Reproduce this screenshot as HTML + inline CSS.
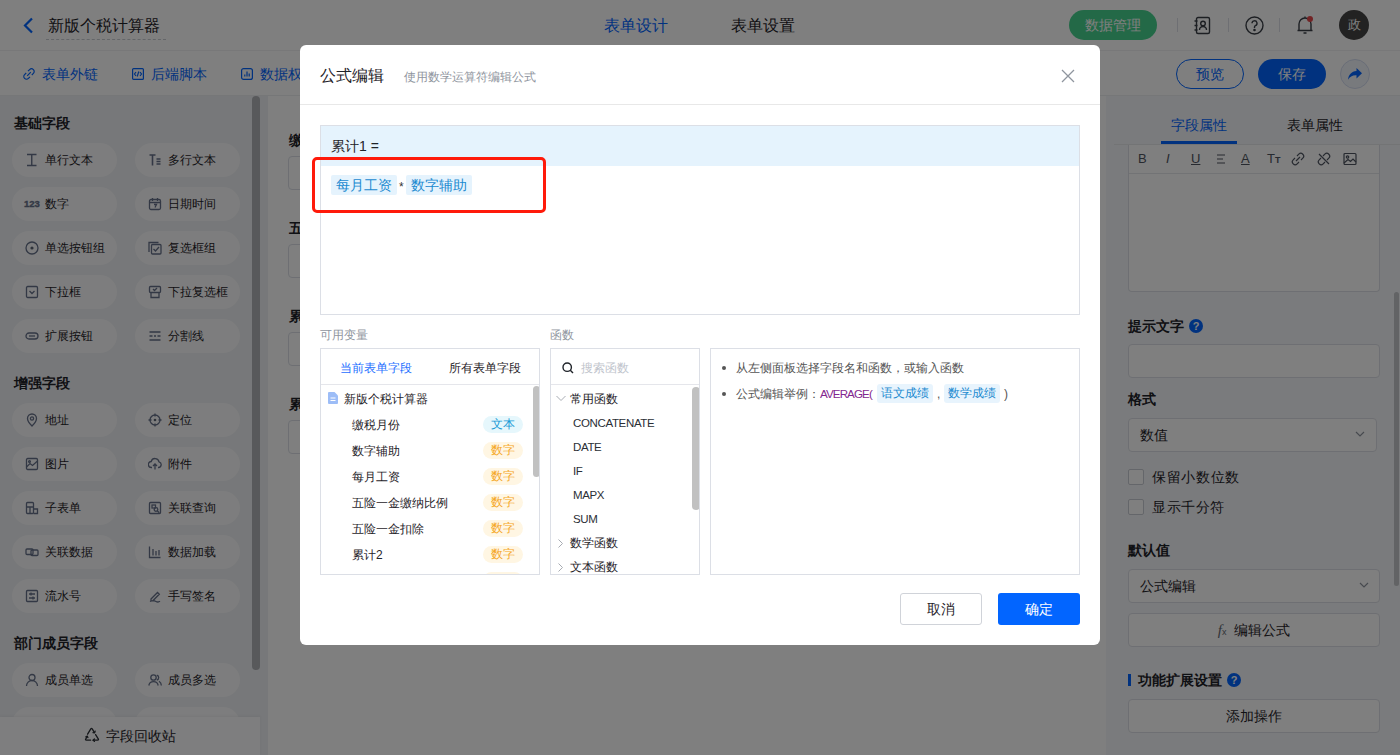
<!DOCTYPE html>
<html><head><meta charset="utf-8">
<style>
*{box-sizing:border-box;margin:0;padding:0}
html,body{width:1400px;height:755px;overflow:hidden;font-family:"Liberation Sans",sans-serif;color:#333;background:#fff}
.a{position:absolute;white-space:nowrap}
#hdr{position:absolute;left:0;top:0;width:1400px;height:51px;background:#fff;border-bottom:1px solid #f0f1f3}
#tb{position:absolute;left:0;top:51px;width:1400px;height:45px;background:#fff;border-bottom:1px solid #eceef1}
#side{position:absolute;left:0;top:96px;width:268px;height:659px;background:#eef0f4}
#canvas{position:absolute;left:268px;top:96px;width:839px;height:659px;background:#fff}
#rp{position:absolute;left:1106px;top:96px;width:294px;height:659px;background:#f5f7fa}
.pill{position:absolute;width:105px;height:34px;border-radius:17px;background:#fbfbfc;font-size:12px;line-height:34px;color:#1f2329}
.pill .ic{position:absolute;left:13px;top:10px;width:14px;height:14px}
.pill .tx{position:absolute;left:33px;top:0}
.sh{position:absolute;left:14px;font-size:14px;font-weight:bold;color:#1f2329;line-height:16px}
#mask{position:absolute;left:0;top:0;width:1400px;height:755px;background:rgba(0,0,0,.5)}
#modal{position:absolute;left:300px;top:45px;width:800px;height:600px;background:#fff;border-radius:6px}
.lbl{position:absolute;font-size:14px;color:#1f2329;font-weight:bold}
.inp{position:absolute;border:1px solid #dcdfe6;border-radius:4px;background:#fff}
</style></head>
<body>
<!-- header -->
<div id="hdr">
  <svg class="a" style="left:22px;top:17px" width="14" height="17" viewBox="0 0 14 17"><path d="M10 1.5 L3 8.5 L10 15.5" fill="none" stroke="#0265ff" stroke-width="2.2"/></svg>
  <div class="a" style="left:48px;top:16px;font-size:16px;line-height:20px;color:#1f2329">新版个税计算器</div>
  <div class="a" style="left:46px;top:39px;width:120px;border-top:1px dashed #c8ccd2"></div>
  <div class="a" style="left:604px;top:16px;font-size:16px;line-height:20px;color:#0265ff">表单设计</div>
  <div class="a" style="left:731px;top:16px;font-size:16px;line-height:20px;color:#1f2329">表单设置</div>
  <div class="a" style="left:1069px;top:10px;width:88px;height:30px;border-radius:15px;background:#47d28f;color:#fff;font-size:14px;line-height:30px;text-align:center">数据管理</div>
  <div class="a" style="left:1177px;top:18px;width:1px;height:14px;background:#dcdfe6"></div>
  <div class="a" style="left:1228px;top:18px;width:1px;height:14px;background:#dcdfe6"></div>
  <div class="a" style="left:1279px;top:18px;width:1px;height:14px;background:#dcdfe6"></div>

  <svg class="a" style="left:1193px;top:16px" width="19" height="19" viewBox="0 0 19 19" fill="none" stroke="#3a3f47" stroke-width="1.4"><rect x="3.5" y="1.5" width="13" height="16" rx="1.5"/><circle cx="10" cy="7.5" r="2.3"/><path d="M6.5 14a3.5 3.5 0 0 1 7 0M1.5 5h3M1.5 9.5h3M1.5 14h3"/></svg>
  <svg class="a" style="left:1245px;top:16px" width="19" height="19" viewBox="0 0 19 19" fill="none" stroke="#3a3f47" stroke-width="1.4"><circle cx="9.5" cy="9.5" r="8.5"/><path d="M7 7.3a2.5 2.5 0 1 1 3.5 2.3c-.7.3-1 .8-1 1.5v.9"/><circle cx="9.5" cy="14" r=".6" fill="#3a3f47"/></svg>
  <svg class="a" style="left:1296px;top:15px" width="19" height="20" viewBox="0 0 19 20" fill="none" stroke="#3a3f47" stroke-width="1.4"><path d="M3 15.5V9a6 6 0 0 1 12 0v6.5M1.5 15.5h15M7.5 18h3M9 1.5v1.5"/></svg>
  <div class="a" style="left:1307px;top:16px;width:6px;height:6px;border-radius:3px;background:#e5474a"></div>
  <div class="a" style="left:1339px;top:10px;width:30px;height:30px;border-radius:15px;background:#444;color:#fff;font-size:13px;line-height:30px;text-align:center">政</div>
</div>
<div id="tb">
  <div class="a" style="left:42px;top:14px;font-size:14px;line-height:18px;color:#0265ff">表单外链</div>
  <div class="a" style="left:151px;top:14px;font-size:14px;line-height:18px;color:#0265ff">后端脚本</div>
  <div class="a" style="left:260px;top:14px;font-size:14px;line-height:18px;color:#0265ff">数据权限</div>

  <svg class="a" style="left:23px;top:17px" width="12" height="12" viewBox="0 0 12 12" fill="none" stroke="#0265ff" stroke-width="1.2"><path d="M5 3.2l1.6-1.6a2.6 2.6 0 0 1 3.8 3.8L8.8 7M7 8.8l-1.6 1.6a2.6 2.6 0 0 1-3.8-3.8L3.2 5M4.2 7.8l3.6-3.6"/></svg>
  <svg class="a" style="left:132px;top:17px" width="12" height="12" viewBox="0 0 12 12" fill="none" stroke="#0265ff" stroke-width="1.2"><rect x=".6" y=".6" width="10.8" height="10.8" rx="1"/><path d="M4 4L2.5 6 4 8M8 4l1.5 2L8 8M6.8 3.5l-1.6 5"/></svg>
  <svg class="a" style="left:241px;top:17px" width="12" height="12" viewBox="0 0 12 12" fill="none" stroke="#0265ff" stroke-width="1.2"><rect x=".6" y=".6" width="10.8" height="10.8" rx="2"/><path d="M3.8 8.5V6.5M6 8.5V3.5M8.2 8.5V5.5"/></svg>
  <div class="a" style="left:1176px;top:8px;width:68px;height:30px;border-radius:15px;border:1px solid #0265ff;color:#0265ff;font-size:14px;line-height:28px;text-align:center">预览</div>
  <div class="a" style="left:1258px;top:8px;width:68px;height:30px;border-radius:15px;background:#0265ff;color:#fff;font-size:14px;line-height:30px;text-align:center">保存</div>
  <div class="a" style="left:1340px;top:8px;width:30px;height:30px;border-radius:15px;border:1px solid #d3dcef;background:#f1f4fb"></div>
  <svg class="a" style="left:1347px;top:16px" width="16" height="14" viewBox="0 0 16 14"><path d="M9.5 1L15 6.2 9.5 11.4V8.3C5.5 8.1 2.8 9.6 1 12.8 1.6 7.8 4.3 4.6 9.5 4.1z" fill="#0265ff"/></svg>
</div>
<div id="side">
  <div class="sh" style="top:19px">基础字段</div>
  <div class="pill" style="left:12px;top:47px"><svg class="ic" width="14" height="14" viewBox="0 0 14 14" fill="none" stroke="#66718a" stroke-width="1.3"><path d="M2 1.5h9.5M2 12.5h9.5M6.75 1.5v11" stroke-width="1.4"/></svg><span class="tx">单行文本</span></div>
  <div class="pill" style="left:135px;top:47px"><svg class="ic" width="14" height="14" viewBox="0 0 14 14" fill="none" stroke="#66718a" stroke-width="1.3"><path d="M1.5 2h6M4.5 2v10.5" stroke-width="1.6"/><path d="M8.5 6h4M8.5 8.5h4M8.5 11h4"/></svg><span class="tx">多行文本</span></div>
  <div class="pill" style="left:12px;top:91px"><span class="ic" style="font-family:'Liberation Sans';font-weight:700;color:#66718a;line-height:14px;left:12px;top:10px;font-size:9.5px;letter-spacing:0;width:auto;-webkit-text-stroke:0.35px #66718a">123</span><span class="tx">数字</span></div>
  <div class="pill" style="left:135px;top:91px"><svg class="ic" width="14" height="14" viewBox="0 0 14 14" fill="none" stroke="#66718a" stroke-width="1.3"><rect x="1.5" y="2.5" width="11" height="10" rx="1.5"/><path d="M1.5 5.5h11M4.5 1v3M9.5 1v3M6 7.5h2.5L7 10.5"/></svg><span class="tx">日期时间</span></div>
  <div class="pill" style="left:12px;top:135px"><svg class="ic" width="14" height="14" viewBox="0 0 14 14" fill="none" stroke="#66718a" stroke-width="1.3"><circle cx="7" cy="7" r="6"/><circle cx="7" cy="7" r="1.6" fill="#5d6575" stroke="none"/></svg><span class="tx">单选按钮组</span></div>
  <div class="pill" style="left:135px;top:135px"><svg class="ic" width="14" height="14" viewBox="0 0 14 14" fill="none" stroke="#66718a" stroke-width="1.3"><path d="M1 11V1.5h9.5"/><rect x="3.5" y="3.5" width="9.5" height="9.5" rx="1"/><path d="M5.5 8l2 2 3.5-4"/></svg><span class="tx">复选框组</span></div>
  <div class="pill" style="left:12px;top:179px"><svg class="ic" width="14" height="14" viewBox="0 0 14 14" fill="none" stroke="#66718a" stroke-width="1.3"><rect x="1.5" y="1.5" width="11" height="11" rx="1.2"/><path d="M4.5 6l2.5 2.5L9.5 6"/></svg><span class="tx">下拉框</span></div>
  <div class="pill" style="left:135px;top:179px"><svg class="ic" width="14" height="14" viewBox="0 0 14 14" fill="none" stroke="#66718a" stroke-width="1.3"><rect x="1.5" y="1.5" width="11" height="6" rx="1"/><path d="M3 7.5v5h8v-5M5 4l1.5 1.5L9 3"/></svg><span class="tx">下拉复选框</span></div>
  <div class="pill" style="left:12px;top:223px"><svg class="ic" width="14" height="14" viewBox="0 0 14 14" fill="none" stroke="#66718a" stroke-width="1.3"><rect x="1" y="4" width="12" height="6" rx="3"/><path d="M4 7h6"/></svg><span class="tx">扩展按钮</span></div>
  <div class="pill" style="left:135px;top:223px"><svg class="ic" width="14" height="14" viewBox="0 0 14 14" fill="none" stroke="#66718a" stroke-width="1.3"><path d="M1.5 3h11M1.5 11h11M1.5 7h3M6 7h2M9.5 7h3"/></svg><span class="tx">分割线</span></div>
  <div class="sh" style="top:279px">增强字段</div>
  <div class="pill" style="left:12px;top:307px"><svg class="ic" width="14" height="14" viewBox="0 0 14 14" fill="none" stroke="#66718a" stroke-width="1.3"><path d="M7 13s-4.5-4.3-4.5-7.5a4.5 4.5 0 0 1 9 0C11.5 8.7 7 13 7 13z"/><circle cx="7" cy="5.5" r="1.6"/></svg><span class="tx">地址</span></div>
  <div class="pill" style="left:135px;top:307px"><svg class="ic" width="14" height="14" viewBox="0 0 14 14" fill="none" stroke="#66718a" stroke-width="1.3"><circle cx="7" cy="7" r="5"/><circle cx="7" cy="7" r="1.3" fill="#5d6575" stroke="none"/><path d="M7 0.5v3M7 10.5v3M0.5 7h3M10.5 7h3"/></svg><span class="tx">定位</span></div>
  <div class="pill" style="left:12px;top:351px"><svg class="ic" width="14" height="14" viewBox="0 0 14 14" fill="none" stroke="#66718a" stroke-width="1.3"><rect x="1.5" y="1.5" width="11" height="11" rx="1.2"/><path d="M1.5 10l3.5-3.5 2.5 2 5-4.5"/><circle cx="4.5" cy="4.5" r="0.9"/></svg><span class="tx">图片</span></div>
  <div class="pill" style="left:135px;top:351px"><svg class="ic" width="14" height="14" viewBox="0 0 14 14" fill="none" stroke="#66718a" stroke-width="1.3"><path d="M4 10.5H3.5a3 3 0 0 1-.3-6A4 4 0 0 1 11 4.8a2.9 2.9 0 0 1-.5 5.7H10"/><path d="M7 12.5V7M5 9l2-2 2 2"/></svg><span class="tx">附件</span></div>
  <div class="pill" style="left:12px;top:395px"><svg class="ic" width="14" height="14" viewBox="0 0 14 14" fill="none" stroke="#66718a" stroke-width="1.3"><rect x="1.5" y="1.5" width="7" height="11" rx="1"/><path d="M1.5 6h7M8.5 8h4v4.5h-4M5 6v6.5"/></svg><span class="tx">子表单</span></div>
  <div class="pill" style="left:135px;top:395px"><svg class="ic" width="14" height="14" viewBox="0 0 14 14" fill="none" stroke="#66718a" stroke-width="1.3"><rect x="1.5" y="1.5" width="11" height="11" rx="1"/><rect x="4" y="4" width="3.5" height="3" /><circle cx="8" cy="8.5" r="1.8"/><path d="M9.3 9.8l2 2"/></svg><span class="tx">关联查询</span></div>
  <div class="pill" style="left:12px;top:439px"><svg class="ic" width="14" height="14" viewBox="0 0 14 14" fill="none" stroke="#66718a" stroke-width="1.3"><rect x="1" y="4" width="7" height="5.5" rx="1"/><rect x="6" y="5" width="7" height="5.5" rx="1"/></svg><span class="tx">关联数据</span></div>
  <div class="pill" style="left:135px;top:439px"><svg class="ic" width="14" height="14" viewBox="0 0 14 14" fill="none" stroke="#66718a" stroke-width="1.3"><path d="M1.5 1.5v11h11M5 10.5V4M8 10.5V6M11 10.5V5"/></svg><span class="tx">数据加载</span></div>
  <div class="pill" style="left:12px;top:483px"><svg class="ic" width="14" height="14" viewBox="0 0 14 14" fill="none" stroke="#66718a" stroke-width="1.3"><rect x="1.5" y="1.5" width="11" height="11" rx="1"/><path d="M4 5h6M4 9h6M6 3.5v3M8 7.5v3"/></svg><span class="tx">流水号</span></div>
  <div class="pill" style="left:135px;top:483px"><svg class="ic" width="14" height="14" viewBox="0 0 14 14" fill="none" stroke="#66718a" stroke-width="1.3"><path d="M2 12.5c2-1.2 4-1.2 6 0s2.5.5 4-.3M3 10l6.5-6.5 1.8 1.8L4.8 11.8H3z"/></svg><span class="tx">手写签名</span></div>
  <div class="sh" style="top:539px">部门成员字段</div>
  <div class="pill" style="left:12px;top:567px"><svg class="ic" width="14" height="14" viewBox="0 0 14 14" fill="none" stroke="#66718a" stroke-width="1.3"><circle cx="7" cy="4.5" r="3"/><path d="M1.5 13a5.5 5.5 0 0 1 11 0"/></svg><span class="tx">成员单选</span></div>
  <div class="pill" style="left:135px;top:567px"><svg class="ic" width="14" height="14" viewBox="0 0 14 14" fill="none" stroke="#66718a" stroke-width="1.3"><circle cx="5.5" cy="4.5" r="2.7"/><path d="M0.8 12.5a4.8 4.8 0 0 1 9.4 0M8.8 2a2.6 2.6 0 0 1 0 5M11 8.2a4.8 4.8 0 0 1 2.3 4.3"/></svg><span class="tx">成员多选</span></div>
  <div class="pill" style="left:12px;top:611px"></div>
  <div class="pill" style="left:135px;top:611px"></div>
  <div class="a" style="left:252px;top:0;width:8px;height:574px;border-radius:4px;background:#b0b2b6"></div>
  <div class="a" style="left:0;top:621px;width:260px;height:38px;background:#fdfdfe;box-shadow:0 -1px 3px rgba(0,0,0,.05);font-size:14px;line-height:38px;color:#1f2329"><svg class="a" style="left:84px;top:10px" width="16" height="15" viewBox="0 0 16 15" fill="none" stroke="#2b2f36" stroke-width="1.3" stroke-linejoin="round" stroke-linecap="round"><path d="M3.6 7.2L6.8 1.8Q7.5 .8 8.2 1.8L10.2 5.2"/><path d="M9 5.6l1.6.2.5-1.6"/><path d="M11.6 7.6L14.4 12.2Q14.8 13.2 13.6 13.2H9.2"/><path d="M10.4 12l-1.3 1.2 1.3 1.1"/><path d="M6.6 13.2H2.4Q1.2 13.2 1.6 12.2L3.2 9.4"/><path d="M1.9 9.9l1.4-.7.6 1.4"/></svg><span class="a" style="left:106px;top:0">字段回收站</span></div>
</div>
<div id="canvas">
  <div class="lbl" style="left:21px;top:36px">缴税月份</div>
  <div class="inp" style="left:20px;top:60px;width:700px;height:34px"></div>
  <div class="lbl" style="left:21px;top:124px">五险一金</div>
  <div class="inp" style="left:20px;top:148px;width:700px;height:34px"></div>
  <div class="lbl" style="left:21px;top:212px">累计1</div>
  <div class="inp" style="left:20px;top:236px;width:700px;height:34px"></div>
  <div class="lbl" style="left:21px;top:300px">累计2</div>
  <div class="inp" style="left:20px;top:324px;width:700px;height:34px"></div>
</div>
<div id="rp">
  <div class="a" style="left:65px;top:20px;font-size:14px;line-height:18px;color:#0265ff">字段属性</div>
  <div class="a" style="left:181px;top:20px;font-size:14px;line-height:18px;color:#1f2329">表单属性</div>
  <div class="a" style="left:55px;top:45px;width:76px;height:3px;background:#0265ff"></div>
  <div class="a" style="left:8px;top:48px;width:286px;height:1px;background:#e6e8eb"></div>
  <div class="a" style="left:22px;top:49px;width:252px;height:147px;border:1px solid #dcdfe6;border-top:none;border-radius:0 0 4px 4px;background:#fff"></div>
  <div class="a" style="left:23px;top:77px;width:250px;height:1px;background:#e4e6ea"></div>
  <div class="a" style="left:32px;top:55px;font-size:13px;line-height:16px;color:#4e5561">B</div>
  <div class="a" style="left:60px;top:55px;font-size:13px;line-height:16px;color:#4e5561;font-style:italic">I</div>
  <div class="a" style="left:85px;top:55px;font-size:13px;line-height:16px;color:#4e5561;text-decoration:underline">U</div>
  <svg class="a" style="left:109px;top:57px" width="12" height="12" viewBox="0 0 12 12" stroke="#4e5561" stroke-width="1.1"><path d="M2 2h8M2 6h6M2 10h8"/></svg>
  <div class="a" style="left:135px;top:55px;font-size:13px;line-height:16px;color:#4e5561;text-decoration:underline">A</div>
  <div class="a" style="left:161px;top:55px;font-size:13px;line-height:16px;color:#4e5561;font-weight:normal">T<span style="font-size:9px;font-weight:bold">T</span></div>
  <svg class="a" style="left:185px;top:56px" width="14" height="14" viewBox="0 0 14 14" fill="none" stroke="#4e5561" stroke-width="1.2"><path d="M6 4l1.8-1.8a2.8 2.8 0 0 1 4 4L10 8M8 10l-1.8 1.8a2.8 2.8 0 0 1-4-4L4 6M5 9l4-4"/></svg>
  <svg class="a" style="left:211px;top:56px" width="14" height="14" viewBox="0 0 14 14" fill="none" stroke="#4e5561" stroke-width="1.2"><path d="M6 4l1.8-1.8a2.8 2.8 0 0 1 4 4L10 8M8 10l-1.8 1.8a2.8 2.8 0 0 1-4-4L4 6M2 2l10 10"/></svg>
  <svg class="a" style="left:237px;top:56px" width="14" height="14" viewBox="0 0 14 14" fill="none" stroke="#4e5561" stroke-width="1.2"><rect x="1" y="1.5" width="12" height="11" rx="1"/><circle cx="4.5" cy="5" r="1.2"/><path d="M1 11l4-3.5 2.5 2 2.5-2.5 3 3"/></svg>
  <div class="a" style="left:22px;top:222px;font-size:14px;line-height:16px;color:#1f2329;font-weight:bold">提示文字</div>
  <div class="a" style="left:83px;top:223px;width:14px;height:14px;border-radius:7px;background:#0265ff;color:#fff;font-size:11px;line-height:14px;text-align:center;font-weight:bold">?</div>
  <div class="a" style="left:22px;top:248px;width:252px;height:34px;border:1px solid #dcdfe6;border-radius:4px;background:#fff"></div>
  <div class="a" style="left:22px;top:295px;font-size:14px;line-height:16px;color:#1f2329;font-weight:bold">格式</div>
  <div class="a" style="left:22px;top:322px;width:249px;height:34px;border:1px solid #dcdfe6;border-radius:4px;background:#fff;font-size:14px;line-height:32px;padding-left:11px;color:#1f2329">数值</div>
  <svg class="a" style="left:249px;top:335px" width="10" height="7" viewBox="0 0 10 7" fill="none" stroke="#8f959e" stroke-width="1.2"><path d="M1 1l4 4 4-4"/></svg>
  <div class="a" style="left:22px;top:373px;width:16px;height:16px;border:1px solid #c9cdd4;border-radius:2px;background:#fff"></div>
  <div class="a" style="left:46px;top:373px;font-size:14px;line-height:16px;color:#1f2329;letter-spacing:0.7px">保留小数位数</div>
  <div class="a" style="left:22px;top:403px;width:16px;height:16px;border:1px solid #c9cdd4;border-radius:2px;background:#fff"></div>
  <div class="a" style="left:46px;top:403px;font-size:14px;line-height:16px;color:#1f2329;letter-spacing:0.6px">显示千分符</div>
  <div class="a" style="left:22px;top:446px;font-size:14px;line-height:16px;color:#1f2329;font-weight:bold">默认值</div>
  <div class="a" style="left:22px;top:473px;width:252px;height:34px;border:1px solid #dcdfe6;border-radius:4px;background:#fff;font-size:14px;line-height:32px;padding-left:11px;color:#1f2329">公式编辑</div>
  <svg class="a" style="left:253px;top:486px" width="10" height="7" viewBox="0 0 10 7" fill="none" stroke="#8f959e" stroke-width="1.2"><path d="M1 1l4 4 4-4"/></svg>
  <div class="a" style="left:22px;top:517px;width:252px;height:34px;border:1px solid #dcdfe6;border-radius:4px;background:#fff;font-size:14px;line-height:32px;text-align:center;color:#1f2329"><i style="font-family:'Liberation Serif',serif;color:#646a73;font-size:15px">f</i><span style="font-size:9px;color:#646a73">x</span>&nbsp; 编辑公式</div>
  <div class="a" style="left:22px;top:578px;width:3px;height:12px;background:#0265ff"></div>
  <div class="a" style="left:32px;top:576px;font-size:14px;line-height:16px;color:#1f2329;font-weight:bold">功能扩展设置</div>
  <div class="a" style="left:121px;top:577px;width:14px;height:14px;border-radius:7px;background:#0265ff;color:#fff;font-size:11px;line-height:14px;text-align:center;font-weight:bold">?</div>
  <div class="a" style="left:22px;top:603px;width:252px;height:34px;border:1px solid #dcdfe6;border-radius:4px;background:#fff;font-size:14px;line-height:32px;text-align:center;color:#1f2329">添加操作</div>
  <div class="a" style="left:288px;top:196px;width:5px;height:294px;border-radius:3px;background:#c4c6ca"></div>
</div>
<div id="mask"></div>
<div id="modal">
  <div class="a" style="left:20px;top:21px;font-size:16px;line-height:20px;color:#1f2329">公式编辑</div>
  <div class="a" style="left:104px;top:24px;font-size:12px;line-height:16px;color:#8f959e">使用数学运算符编辑公式</div>
  <div class="a" style="left:0;top:59px;width:800px;height:1px;background:#e8e8e8"></div>
  <div class="a" style="left:761px;top:24px"><svg width="14" height="14" viewBox="0 0 14 14"><path d="M1 1L13 13M13 1L1 13" stroke="#8f959e" stroke-width="1.3"/></svg></div>
  <!-- formula box -->
  <div class="a" style="left:20px;top:80px;width:760px;height:190px;border:1px solid #dcdfe6;background:#fff"></div>
  <div class="a" style="left:21px;top:81px;width:758px;height:40px;background:#e5f3fd"></div>
  <div class="a" style="left:31px;top:92px;font-size:14px;line-height:18px;color:#1f2329">累计1 =</div>
  <div class="a" style="left:31px;top:130px;height:20px;padding:0 5px;background:#e5f3fd;color:#1b8ad0;font-size:14px;line-height:20px;border-radius:2px">每月工资</div>
  <div class="a" style="left:99px;top:132px;font-size:12px;line-height:20px;color:#333">*</div>
  <div class="a" style="left:106px;top:130px;height:20px;padding:0 5px;background:#e5f3fd;color:#1b8ad0;font-size:14px;line-height:20px;border-radius:2px">数字辅助</div>
  <div class="a" style="left:12px;top:112px;width:234px;height:56px;border:3px solid #ff1a0a;border-radius:5px"></div>
  <!-- labels -->
  <div class="a" style="left:20px;top:282px;font-size:12px;line-height:16px;color:#8f959e">可用变量</div>
  <div class="a" style="left:250px;top:282px;font-size:12px;line-height:16px;color:#8f959e">函数</div>
  <!-- vars panel -->
  <div class="a" style="left:20px;top:303px;width:220px;height:227px;border:1px solid #dcdfe6;overflow:hidden">
    <div class="a" style="left:19px;top:11px;font-size:12px;line-height:16px;color:#1e6fff">当前表单字段</div>
    <div class="a" style="left:128px;top:11px;font-size:12px;line-height:16px;color:#1f2329">所有表单字段</div>
    <div class="a" style="left:0;top:35px;width:220px;height:1px;background:#e5e6eb"></div>
    <svg class="a" style="left:7px;top:43px" width="10" height="12" viewBox="0 0 10 12"><path d="M0 1a1 1 0 0 1 1-1h5.5L10 3.5V11a1 1 0 0 1-1 1H1a1 1 0 0 1-1-1z" fill="#9dbdf7"/><path d="M2.5 6h5M2.5 8.5h5" stroke="#fff" stroke-width="1"/></svg>
    <div class="a" style="left:23px;top:42px;font-size:12px;line-height:16px;color:#1f2329">新版个税计算器</div>
    <div class="a" style="left:31px;top:68px;font-size:12px;line-height:16px;color:#1f2329">缴税月份</div>
    <div class="a" style="left:31px;top:94px;font-size:12px;line-height:16px;color:#1f2329">数字辅助</div>
    <div class="a" style="left:31px;top:120px;font-size:12px;line-height:16px;color:#1f2329">每月工资</div>
    <div class="a" style="left:31px;top:146px;font-size:12px;line-height:16px;color:#1f2329">五险一金缴纳比例</div>
    <div class="a" style="left:31px;top:172px;font-size:12px;line-height:16px;color:#1f2329">五险一金扣除</div>
    <div class="a" style="left:31px;top:198px;font-size:12px;line-height:16px;color:#1f2329">累计2</div>
    <div class="a" style="left:162px;top:67px;width:40px;height:17px;border-radius:9px;background:#e6f7fc;color:#1a9bd7;font-size:12px;line-height:17px;text-align:center">文本</div>
    <div class="a" style="left:162px;top:93px;width:40px;height:17px;border-radius:9px;background:#fff6e3;color:#f5a623;font-size:12px;line-height:17px;text-align:center">数字</div>
    <div class="a" style="left:162px;top:119px;width:40px;height:17px;border-radius:9px;background:#fff6e3;color:#f5a623;font-size:12px;line-height:17px;text-align:center">数字</div>
    <div class="a" style="left:162px;top:145px;width:40px;height:17px;border-radius:9px;background:#fff6e3;color:#f5a623;font-size:12px;line-height:17px;text-align:center">数字</div>
    <div class="a" style="left:162px;top:171px;width:40px;height:17px;border-radius:9px;background:#fff6e3;color:#f5a623;font-size:12px;line-height:17px;text-align:center">数字</div>
    <div class="a" style="left:162px;top:197px;width:40px;height:17px;border-radius:9px;background:#fff6e3;color:#f5a623;font-size:12px;line-height:17px;text-align:center">数字</div>
    <div class="a" style="left:162px;top:223px;width:40px;height:17px;border-radius:9px;background:#fff6e3"></div>
    <div class="a" style="left:212px;top:37px;width:7px;height:91px;border-radius:4px;background:#c1c1c1"></div>
  </div>
  <!-- func panel -->
  <div class="a" style="left:250px;top:303px;width:150px;height:227px;border:1px solid #dcdfe6;overflow:hidden">
    <svg class="a" style="left:11px;top:13px" width="12" height="12" viewBox="0 0 12 12" fill="none" stroke="#1f2329" stroke-width="1.4"><circle cx="5.2" cy="5.2" r="4.2"/><path d="M8.3 8.3l2.7 2.7"/></svg>
    <div class="a" style="left:30px;top:11px;font-size:12px;line-height:16px;color:#c0c4cc">搜索函数</div>
    <div class="a" style="left:0;top:35px;width:150px;height:1px;background:#e5e6eb"></div>
    <svg class="a" style="left:5px;top:46px" width="10" height="7" viewBox="0 0 10 7" fill="none" stroke="#a8acb3" stroke-width="1"><path d="M.5 1l4.5 4.5L9.5 1"/></svg>
    <div class="a" style="left:19px;top:42px;font-size:12px;line-height:16px;color:#1f2329">常用函数</div>
    <div class="a" style="left:22px;top:66px;font-size:12px;line-height:16px;color:#2b2f36;letter-spacing:-0.35px;font-size:11.5px">CONCATENATE</div>
    <div class="a" style="left:22px;top:90px;font-size:12px;line-height:16px;color:#2b2f36;letter-spacing:-0.35px;font-size:11.5px">DATE</div>
    <div class="a" style="left:22px;top:114px;font-size:12px;line-height:16px;color:#2b2f36;letter-spacing:-0.35px;font-size:11.5px">IF</div>
    <div class="a" style="left:22px;top:138px;font-size:12px;line-height:16px;color:#2b2f36;letter-spacing:-0.35px;font-size:11.5px">MAPX</div>
    <div class="a" style="left:22px;top:162px;font-size:12px;line-height:16px;color:#2b2f36;letter-spacing:-0.35px;font-size:11.5px">SUM</div>
    <svg class="a" style="left:7px;top:190px" width="5" height="9" viewBox="0 0 5 9" fill="none" stroke="#a8acb3" stroke-width="1"><path d="M.5 .5l4 4-4 4"/></svg>
    <div class="a" style="left:19px;top:186px;font-size:12px;line-height:16px;color:#1f2329">数学函数</div>
    <svg class="a" style="left:7px;top:214px" width="5" height="9" viewBox="0 0 5 9" fill="none" stroke="#a8acb3" stroke-width="1"><path d="M.5 .5l4 4-4 4"/></svg>
    <div class="a" style="left:19px;top:210px;font-size:12px;line-height:16px;color:#1f2329">文本函数</div>
    <div class="a" style="left:141px;top:38px;width:8px;height:123px;border-radius:4px;background:#c1c1c1"></div>
  </div>
  <!-- help panel -->
  <div class="a" style="left:410px;top:303px;width:370px;height:227px;border:1px solid #dcdfe6">
    <div class="a" style="left:11px;top:17px;width:4px;height:4px;border-radius:2px;background:#555"></div>
    <div class="a" style="left:25px;top:11px;font-size:12px;line-height:16px;color:#555">从左侧面板选择字段名和函数，或输入函数</div>
    <div class="a" style="left:11px;top:43px;width:4px;height:4px;border-radius:2px;background:#555"></div>
    <div class="a" style="left:25px;top:37px;font-size:12px;line-height:16px;color:#555">公式编辑举例：<span style="color:#83278f;letter-spacing:-0.9px;font-size:11.6px">AVERAGE(</span></div>
    <div class="a" style="left:166px;top:35px;width:56px;height:19px;border-radius:3px;background:#e8f4fd;color:#1b8ad0;font-size:12px;line-height:19px;text-align:center">语文成绩</div>
    <div class="a" style="left:226px;top:37px;font-size:12px;line-height:16px;color:#555">,</div>
    <div class="a" style="left:233px;top:35px;width:56px;height:19px;border-radius:3px;background:#e8f4fd;color:#1b8ad0;font-size:12px;line-height:19px;text-align:center">数学成绩</div>
    <div class="a" style="left:293px;top:37px;font-size:12px;line-height:16px;color:#555">)</div>
  </div>
  <!-- buttons -->
  <div class="a" style="left:600px;top:548px;width:82px;height:32px;border:1px solid #d0d3d9;border-radius:3px;background:#fff;color:#1f2329;font-size:14px;line-height:30px;text-align:center">取消</div>
  <div class="a" style="left:698px;top:548px;width:82px;height:32px;border-radius:3px;background:#0265ff;color:#fff;font-size:14px;line-height:32px;text-align:center">确定</div>
</div>
</body></html>
